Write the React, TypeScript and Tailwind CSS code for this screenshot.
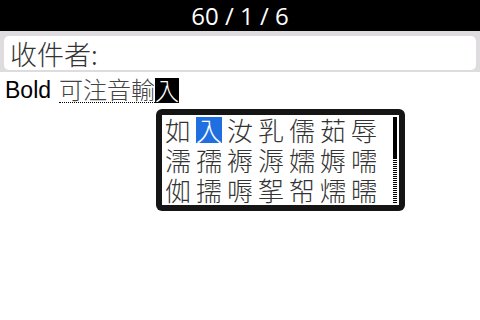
import React from 'react'

const cjk = "'Noto Sans CJK TC', 'Noto Sans CJK SC', sans-serif"

const rows: string[][] = [
  ['如', '入', '汝', '乳', '儒', '茹', '辱'],
  ['濡', '孺', '褥', '溽', '嬬', '媷', '嚅'],
  ['侞', '擩', '嗕', '挐', '帤', '燸', '曘'],
]

const App: React.FC = () => {
  return (
    <div className="w-[480px] h-[320px] bg-white overflow-hidden" style={{ fontFamily: cjk }}>
      {/* header */}
      <div className="h-[31px] bg-black text-white flex items-center justify-center text-[24px] leading-none font-['Open_Sans',sans-serif]">
        60 / 1 / 6
      </div>

      {/* recipient field */}
      <div className="bg-[#dedcde] px-[4px] pt-[5px] pb-[2px]">
        <div className="h-[34px] bg-white rounded-[5px] flex items-center pl-[6px] text-[27px] font-light text-[#333] leading-none">
          收件者:
        </div>
      </div>

      {/* body */}
      <div className="relative">
        <div className="flex items-center h-[26px] mt-[5px] pl-[5px] text-[23px] leading-none">
          <span className="font-['Liberation_Sans',sans-serif] text-black mr-[8px]">Bold</span>
          <span className="text-[24px] font-light text-[#444] border-b border-dotted border-black pb-[1px]">可注音輸</span>
          <span className="text-[24px] bg-black text-white font-light h-[25px] flex items-center">入</span>
        </div>

        {/* candidate popup */}
        <div className="absolute left-[156px] top-[32px] w-[249px] h-[102px] bg-[#151515] rounded-[6px] p-[6px]">
          <div className="flex bg-white h-full">
            <div className="flex-1 flex flex-col pl-[3px] pt-[2px] gap-[4px]">
              {rows.map((row, i) => (
                <div key={i} className="flex gap-[5px]">
                  {row.map((c, j) => (
                    <span
                      key={j}
                      className={`w-[26px] h-[26px] flex items-center justify-center text-[26px] font-light leading-none ${
                        i === 0 && j === 1 ? 'bg-[#1f6fe0] text-white' : 'text-[#333]'
                      }`}
                    >
                      {c}
                    </span>
                  ))}
                </div>
              ))}
            </div>
            <div className="w-[4px] mr-[2px] mt-[2px] mb-[2px] flex flex-col">
              <div className="h-[42px] bg-black" />
              <div className="flex-1 bg-[repeating-linear-gradient(0deg,#000_0px,#000_1px,#fff_1px,#fff_2px)]" />
            </div>
          </div>
        </div>
      </div>
    </div>
  )
}

export default App
